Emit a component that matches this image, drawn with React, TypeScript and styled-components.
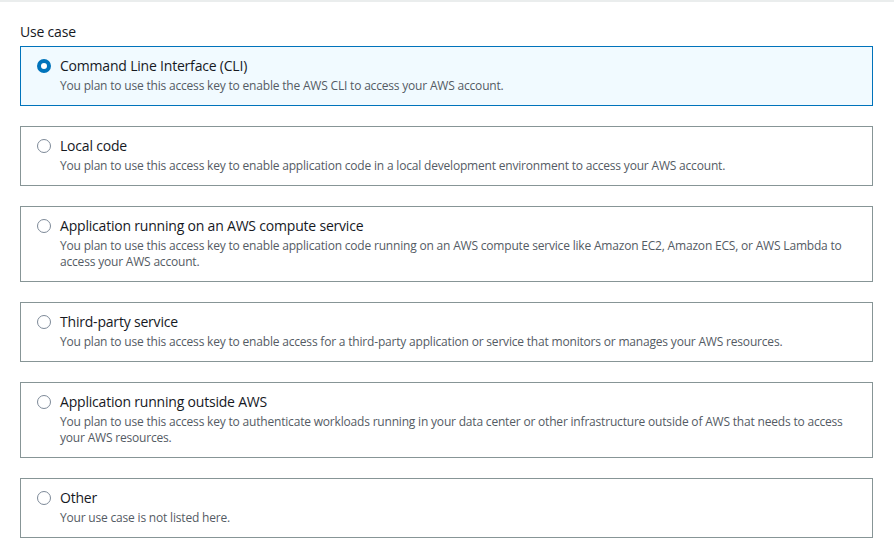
import React from "react";
import styled, { createGlobalStyle } from "styled-components";

const Global = createGlobalStyle`
  html, body { margin: 0; padding: 0; background: #ffffff; }
  body { font-family: "Open Sans", "Noto Sans", Arial, sans-serif; color: #16191f; }
`;

const Page = styled.div`
  width: 894px;
  height: 542px;
  box-sizing: border-box;
  border-top: 2px solid #eaeded;
  padding: 20px 21px 0 20px;
`;

const Label = styled.div`
  font-size: 14px;
  line-height: 20px;
  letter-spacing: -0.2px;
  color: #16191f;
  margin-bottom: 4px;
`;

const List = styled.div`
  display: flex;
  flex-direction: column;
  gap: 20px;
`;

const Tile = styled.label<{ $selected?: boolean }>`
  display: grid;
  grid-template-columns: 14px 1fr;
  column-gap: 9px;
  box-sizing: border-box;
  border: 1px solid ${(p) => (p.$selected ? "#0073bb" : "#879596")};
  background: ${(p) => (p.$selected ? "#f1faff" : "#ffffff")};
  padding: 9px 16px 11px 16px;
  cursor: pointer;
`;

const Radio = styled.span<{ $checked?: boolean }>`
  width: 14px;
  height: 14px;
  margin-top: 3px;
  box-sizing: border-box;
  border-radius: 50%;
  border: ${(p) => (p.$checked ? "4px solid #0073bb" : "1px solid #7d8998")};
  background: #ffffff;
`;

const Body = styled.div`
  display: flex;
  flex-direction: column;
  gap: 2px;
`;

const Title = styled.div`
  font-size: 14px;
  line-height: 20px;
  letter-spacing: -0.2px;
  color: #16191f;
`;

const Desc = styled.div`
  font-size: 12px;
  line-height: 16px;
  letter-spacing: -0.19px;
  color: #545b64;
`;

const options = [
  {
    title: "Command Line Interface (CLI)",
    desc: "You plan to use this access key to enable the AWS CLI to access your AWS account.",
  },
  {
    title: "Local code",
    desc: "You plan to use this access key to enable application code in a local development environment to access your AWS account.",
  },
  {
    title: "Application running on an AWS compute service",
    desc: "You plan to use this access key to enable application code running on an AWS compute service like Amazon EC2, Amazon ECS, or AWS Lambda to access your AWS account.",
  },
  {
    title: "Third-party service",
    desc: "You plan to use this access key to enable access for a third-party application or service that monitors or manages your AWS resources.",
  },
  {
    title: "Application running outside AWS",
    desc: "You plan to use this access key to authenticate workloads running in your data center or other infrastructure outside of AWS that needs to access your AWS resources.",
  },
  {
    title: "Other",
    desc: "Your use case is not listed here.",
  },
];

export default function App() {
  const [sel, setSel] = React.useState(0);
  return (
    <>
      <Global />
      <Page>
        <Label>Use case</Label>
        <List>
          {options.map((o, i) => (
            <Tile key={o.title} $selected={sel === i} onClick={() => setSel(i)}>
              <Radio $checked={sel === i} />
              <Body>
                <Title>{o.title}</Title>
                <Desc>{o.desc}</Desc>
              </Body>
            </Tile>
          ))}
        </List>
      </Page>
    </>
  );
}
